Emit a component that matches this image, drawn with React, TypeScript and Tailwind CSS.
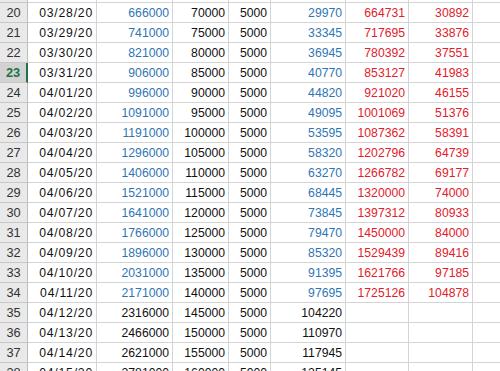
import React from "react";

type Row = {
  n: number;
  d: string;
  c: string;
  e: string;
  f: string;
  g: string;
  h: string;
  i: string;
  blue: boolean;
};

const raw: [number, string, string, string, string, string, string, string][] = [
  [19, "", "", "", "", "", "", ""],
  [20, "03/28/20", "666000", "70000", "5000", "29970", "664731", "30892"],
  [21, "03/29/20", "741000", "75000", "5000", "33345", "717695", "33876"],
  [22, "03/30/20", "821000", "80000", "5000", "36945", "780392", "37551"],
  [23, "03/31/20", "906000", "85000", "5000", "40770", "853127", "41983"],
  [24, "04/01/20", "996000", "90000", "5000", "44820", "921020", "46155"],
  [25, "04/02/20", "1091000", "95000", "5000", "49095", "1001069", "51376"],
  [26, "04/03/20", "1191000", "100000", "5000", "53595", "1087362", "58391"],
  [27, "04/04/20", "1296000", "105000", "5000", "58320", "1202796", "64739"],
  [28, "04/05/20", "1406000", "110000", "5000", "63270", "1266782", "69177"],
  [29, "04/06/20", "1521000", "115000", "5000", "68445", "1320000", "74000"],
  [30, "04/07/20", "1641000", "120000", "5000", "73845", "1397312", "80933"],
  [31, "04/08/20", "1766000", "125000", "5000", "79470", "1450000", "84000"],
  [32, "04/09/20", "1896000", "130000", "5000", "85320", "1529439", "89416"],
  [33, "04/10/20", "2031000", "135000", "5000", "91395", "1621766", "97185"],
  [34, "04/11/20", "2171000", "140000", "5000", "97695", "1725126", "104878"],
  [35, "04/12/20", "2316000", "145000", "5000", "104220", "", ""],
  [36, "04/13/20", "2466000", "150000", "5000", "110970", "", ""],
  [37, "04/14/20", "2621000", "155000", "5000", "117945", "", ""],
  [38, "04/15/20", "2781000", "160000", "5000", "125145", "", ""],
];

const rows: Row[] = raw.map(([n, d, c, e, f, g, h, i]) => ({
  n,
  d,
  c,
  e,
  f,
  g,
  h,
  i,
  blue: n <= 34,
}));

const cell =
  "flex items-end justify-end pr-[3px] pb-[2px] border-r border-b border-[#d4d4d4] shrink-0 h-full leading-[14px]";

export default function App() {
  return (
    <div
      className="w-[500px] h-[371px] overflow-hidden bg-white text-[12.2px] text-[#111]"
      style={{ fontFamily: '"Liberation Sans", Arial, sans-serif' }}
    >
      <div className="-mt-[17px] flex flex-col">
        {rows.map((r) => {
          const sel = r.n === 23;
          const blueCls = r.blue ? "text-[#2f75b5]" : "text-[#111]";
          return (
            <div key={r.n} className="flex h-[20px]">
              <div
                className={
                  "flex items-end justify-center pb-[2px] leading-[14px] shrink-0 h-full w-[28px] border-b border-[#c8c8c8] text-[12.8px] " +
                  (sel
                    ? "bg-[#d2d2d2] text-[#217346] font-bold border-r-2 border-r-[#217346]"
                    : "bg-[#e9e9e9] text-[#333] border-r border-r-[#bdbdbd]")
                }
              >
                {r.n === 19 ? "" : r.n}
              </div>
              <div className={cell + " w-[69px] tracking-[0.8px]"}>{r.d}</div>
              <div className={cell + " w-[76px] " + blueCls}>{r.c}</div>
              <div className={cell + " w-[56px]"}>{r.e}</div>
              <div className={cell + " w-[42px]"}>{r.f}</div>
              <div className={cell + " w-[75px] " + blueCls}>{r.g}</div>
              <div className={cell + " w-[63px] text-[#e3202a]"}>{r.h}</div>
              <div className={cell + " w-[64px] text-[#e3202a]"}>{r.i}</div>
              <div className={cell + " w-[60px]"}></div>
            </div>
          );
        })}
      </div>
    </div>
  );
}
